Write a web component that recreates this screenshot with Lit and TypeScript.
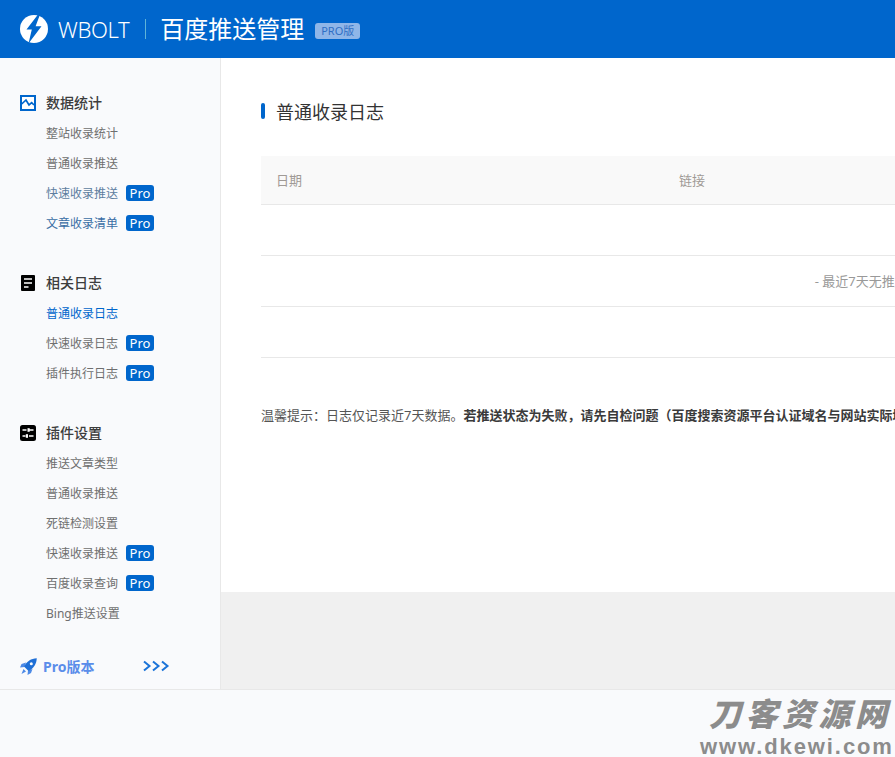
import { LitElement, html, css, svg } from "lit";
import { customElement } from "lit/decorators.js";

const ICONS: Record<string, unknown> = {
  chart: html`<svg class="ico" viewBox="0 0 16 16"><rect x="1" y="1" width="14" height="14" fill="#fff" stroke="#0066cc" stroke-width="2"/><path d="M1.7 9L6 5L9 10L11.7 7.7L14 10" fill="none" stroke="#0066cc" stroke-width="1.7"/></svg>`,
  log: html`<svg class="ico" viewBox="0 0 16 16"><rect x="1" y="0" width="14" height="16" rx="1" fill="#000"/><path d="M4 4H12M4 8H12M4 12H8.5" stroke="#fff" stroke-width="1.7"/></svg>`,
  set: html`<svg class="ico" viewBox="0 0 16 16"><rect x="0" y="0" width="16" height="16" rx="2.5" fill="#000"/><path d="M2.5 5H6.5M9 5H13.5M2.5 11H5.5M9 11H13.5" stroke="#fff" stroke-width="1.4"/><rect x="7.5" y="3.2" width="2.2" height="3.6" fill="#fff"/><rect x="5.8" y="9.2" width="2.2" height="3.6" fill="#fff"/></svg>`,
};

type Item = { t: string; pro?: boolean; cls?: string };
type Group = { icon: string; title: string; items: Item[] };

const GROUPS: Group[] = [
  {
    icon: "chart",
    title: "数据统计",
    items: [
      { t: "整站收录统计" },
      { t: "普通收录推送" },
      { t: "快速收录推送", pro: true, cls: "slate" },
      { t: "文章收录清单", pro: true, cls: "steel" },
    ],
  },
  {
    icon: "log",
    title: "相关日志",
    items: [
      { t: "普通收录日志", cls: "active" },
      { t: "快速收录日志", pro: true },
      { t: "插件执行日志", pro: true },
    ],
  },
  {
    icon: "set",
    title: "插件设置",
    items: [
      { t: "推送文章类型" },
      { t: "普通收录推送" },
      { t: "死链检测设置" },
      { t: "快速收录推送", pro: true },
      { t: "百度收录查询", pro: true },
      { t: "Bing推送设置" },
    ],
  },
];

@customElement("app-root")
export class AppRoot extends LitElement {
  static styles = css`
    :host {
      display: block;
      width: 895px;
      height: 757px;
      overflow: hidden;
      position: relative;
      background: #f9fafc;
      font-family: "Noto Sans", "Noto Sans CJK SC", sans-serif;
    }
    .top {
      height: 58px;
      background: #0066cc;
      display: flex;
      align-items: center;
      padding-left: 20px;
      color: #fff;
    }
    .logo { width: 28px; height: 28px; display: block; }
    .brand {
      font-size: 22px;
      font-weight: 300;
      margin-left: 10px;
      letter-spacing: -0.4px;
      line-height: 30px;
    }
    .sep {
      width: 1px;
      height: 20px;
      background: #5fb4d8;
      margin: 0 15px 0 16px;
    }
    .name { font-size: 24px; line-height: 32px; margin-left: -1px; }
    .ver {
      margin-left: 11px;
      margin-top: 3px;
      width: 45px;
      height: 16px;
      border-radius: 3px;
      background: #8fb6e8;
      color: #2f6fc4;
      font-size: 11px;
      line-height: 16px;
      text-align: center;
    }
    .body { display: flex; height: 631px; }
    .side {
      box-sizing: border-box;
      flex: none;
      padding: 30px 0 0 20px;
      background: #f9fafc;
      border-right: 1px solid #e8e8e8;
      width: 221px;
    }
    .group { margin-bottom: 30px; }
    .gt {
      height: 30px;
      display: flex;
      align-items: center;
      font-size: 14px;
      font-weight: 500;
      color: #3d3d3d;
    }
    .gt span { margin-bottom: 2px; }
    .ico { width: 16px; height: 16px; margin-right: 10px; flex: none; display: block; }
    .it {
      height: 30px;
      display: flex;
      align-items: center;
      padding-left: 26px;
      font-size: 12px;
      color: #6f6f6f;
    }
    .it.slate { color: #5d7d9f; }
    .it.steel { color: #3a6ea5; }
    .it.active { color: #0066cc; }
    .pro {
      margin-left: 8px;
      width: 28px;
      height: 16px;
      border-radius: 3px;
      background: #0066cc;
      color: #fff;
      font-size: 13px;
      line-height: 16px;
      text-align: center;
    }
    .up {
      display: flex;
      align-items: center;
      height: 30px;
      margin-top: -7px;
      color: #5b8dea;
      font-size: 14px;
      font-weight: 700;
    }
    .rocket { width: 17px; height: 17px; margin-right: 6px; display: block; }
    .arrows { width: 27px; height: 12px; margin-left: 49px; display: block; }
    .right { flex: 1; min-width: 0; background: #f0f0f0; overflow: hidden; }
    .panel {
      height: 534px;
      box-sizing: border-box;
      background: #fff;
      padding: 42px 0 0 40px;
    }
    .h {
      display: flex;
      align-items: center;
      height: 22px;
      font-size: 18px;
      color: #333;
      margin-bottom: 34px;
    }
    .h::before {
      content: "";
      width: 4px;
      height: 16px;
      border-radius: 2px;
      background: #0066cc;
      margin-right: 11px;
    }
    .tbl { width: 1234px; }
    .head {
      display: grid;
      grid-template-columns: 403px 1fr;
      height: 48px;
      align-items: center;
      background: #f9f9f9;
      border-bottom: 1px solid #e8e8e8;
      font-size: 13px;
      color: #a09a96;
    }
    .head span { padding-left: 15px; margin-bottom: 2px; }
    .row {
      height: 50px;
      box-sizing: content-box;
      border-bottom: 1px solid #e8e8e8;
      display: flex;
      align-items: center;
      justify-content: center;
      font-size: 13px;
      color: #999;
    }
    .row span { margin-bottom: 1px; }
    .tip {
      margin-top: 47px;
      font-size: 13px;
      line-height: 20px;
      color: #555;
      white-space: nowrap;
    }
    .tip b { color: #3a3a3a; font-weight: 700; }
    .foot {
      height: 67px;
      border-top: 1px solid #e8e8e8;
      background: #f9fafc;
    }
    .mark {
      position: absolute;
      left: 700px;
      top: 693px;
      width: 195px;
      color: #8c8c8c;
      font-weight: 900;
      white-space: nowrap;
    }
    .m1 {
      display: block;
      font-size: 32px;
      line-height: 42px;
      padding-left: 9px;
      letter-spacing: 4.5px;
      font-style: italic;
    }
    .m2 {
      display: block;
      font-family: "Liberation Sans", sans-serif;
      font-size: 22px;
      line-height: 23px;
      letter-spacing: 1.9px;
      font-weight: 700;
    }
  `;

  render() {
    return html`
      <div class="top">
        <svg class="logo" viewBox="0 0 28 28">
          <circle cx="14" cy="14" r="14" fill="#fff"/>
          <path fill="#0066cc" d="M18 -0.5L6.5 14.5H11.8L8.5 28.5L21.5 11.3H15.6L20 -0.5z"/>
        </svg>
        <span class="brand">WBOLT</span>
        <span class="sep"></span>
        <span class="name">百度推送管理</span>
        <span class="ver">PRO版</span>
      </div>
      <div class="body">
        <nav class="side">
          ${GROUPS.map(
            (g) => html`<div class="group">
              <div class="gt">${ICONS[g.icon]}<span>${g.title}</span></div>
              ${g.items.map(
                (i) => html`<div class="it ${i.cls ?? ""}">
                  ${i.t}${i.pro ? html`<span class="pro">Pro</span>` : ""}
                </div>`
              )}
            </div>`
          )}
          <div class="up">
            <svg class="rocket" viewBox="0 0 17 17">
              <path fill="#4d8ae6" d="M6 4.5L1.5 6L0 9.5L4.5 9zM12.5 11L11 15L7.5 17L8 12.5zM3.5 11L6 13.5L1.5 16z"/>
              <path fill="#1f6fd6" d="M16.8 0.2C11 0.5 6.8 3.2 4 8.5L8.5 13C13.8 10.2 16.5 6 16.8 0.2z"/>
              <circle cx="11.3" cy="5.7" r="1.5" fill="#f9fafc"/>
            </svg>
            Pro版本
            <svg class="arrows" viewBox="0 0 27 12">
              ${[0, 9, 18].map(
                (x) => svg`<path d="M${x + 1} 1.5L${x + 6.5} 6L${x + 1} 10.5" fill="none" stroke="#1a73d8" stroke-width="2"/>`
              )}
            </svg>
          </div>
        </nav>
        <div class="right">
          <section class="panel">
            <div class="h">普通收录日志</div>
            <div class="tbl">
              <div class="head"><span>日期</span><span>链接</span></div>
              <div class="row"></div>
              <div class="row"><span>- 最近7天无推送数据 -</span></div>
              <div class="row"></div>
            </div>
            <div class="tip">温馨提示：日志仅记录近7天数据。<b>若推送状态为失败，请先自检问题（百度搜索资源平台认证域名与网站实际域名是否一致）</b></div>
          </section>
        </div>
      </div>
      <div class="foot"></div>
      <div class="mark"><span class="m1">刀客资源网</span><span class="m2">www.dkewi.com</span></div>
    `;
  }
}
